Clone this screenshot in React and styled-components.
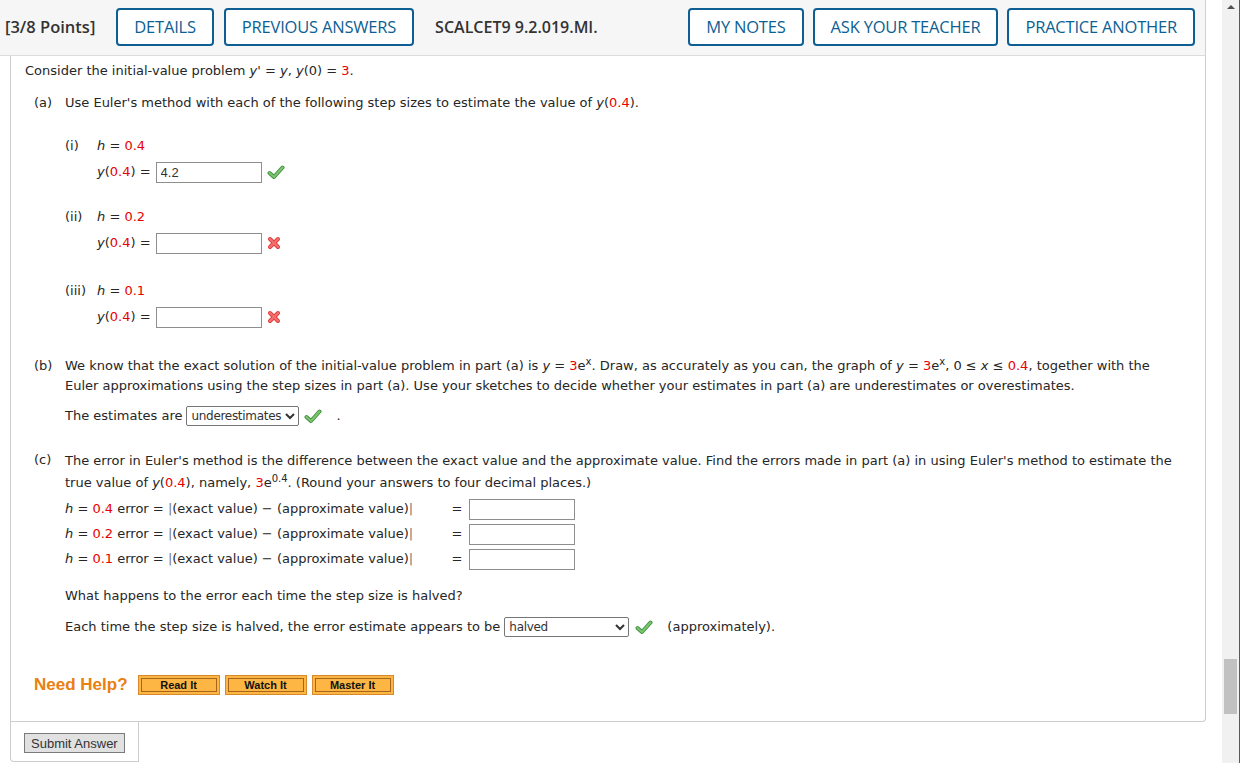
import React from "react";
import styled, { createGlobalStyle } from "styled-components";

const GlobalStyle = createGlobalStyle`
  html, body { margin: 0; padding: 0; background: #fff; overflow: hidden; }
  * { box-sizing: border-box; }
`;

const RED = "#e60000";

const Page = styled.div`
  display: flex;
  width: 1240px;
  height: 763px;
  overflow: hidden;
  font-family: "DejaVu Sans", Verdana, sans-serif;
  font-size: 13px;
  color: #262626;
`;

const Main = styled.div`
  width: 1206px;
  display: flex;
  flex-direction: column;
`;

const Gutter = styled.div`
  width: 16px;
`;

const Scrollbar = styled.div`
  width: 18px;
  background: #f1f1f1;
  border-right: 1px solid #5a5a5a;
  display: flex;
  flex-direction: column;
  align-items: center;
`;

const ArrowUp = styled.div`
  margin-top: 5px;
  width: 0;
  height: 0;
  border-left: 4px solid transparent;
  border-right: 4px solid transparent;
  border-bottom: 4px solid #505050;
`;

const Thumb = styled.div`
  margin-top: 650px;
  width: 13px;
  height: 55px;
  background: #c1c1c1;
`;

const Header = styled.header`
  height: 56px;
  background: #f6f6f6;
  border-bottom: 1px solid #dcdcdc;
  border-right: 1px solid #cfcfcf;
  display: flex;
  align-items: center;
  padding: 0 10px 2px 5px;
  font-family: "Open Sans", "Noto Sans", sans-serif;
`;

const Points = styled.span`
  font-size: 16.5px;
  font-weight: 600;
  color: #333;
  margin-right: 21px;
`;

const HeadButton = styled.button`
  height: 38px;
  padding: 0 16px;
  margin-right: ${(p) => p.$gap || 0}px;
  border: 2px solid #0d5f93;
  border-radius: 4px;
  background: #fff;
  color: #0d5f93;
  font-family: "Open Sans", "Noto Sans", sans-serif;
  font-size: 16.5px;
  letter-spacing: -0.2px;
`;

const Code = styled.span`
  font-size: 16px;
  font-weight: 600;
  color: #333;
  margin-left: 21px;
`;

const Spacer = styled.div`
  flex: 1;
`;

const Panel = styled.div`
  margin-left: 10px;
  border: 1px solid #cdcdcd;
  border-top: none;
  border-radius: 0 0 4px 0;
  padding: 5px 20px 26px 14px;
  line-height: 20px;
`;

const Line = styled.div`
  margin-top: ${(p) => p.$mt || 0}px;
  line-height: ${(p) => p.$lh || 20}px;
`;

const Part = styled.div`
  display: grid;
  grid-template-columns: 31px 1fr;
  margin-left: 9px;
  margin-top: ${(p) => p.$mt || 0}px;
`;

const SubItem = styled.div`
  display: grid;
  grid-template-columns: 32px 1fr;
  margin-top: ${(p) => p.$mt || 0}px;
`;

const Row = styled.div`
  display: flex;
  align-items: center;
  height: 22px;
  margin-top: ${(p) => p.$mt || 0}px;
`;

const I = styled.i`
  font-style: italic;
`;

const Red = styled.span`
  color: ${RED};
`;

const Sup = styled.sup`
  font-size: 10px;
  vertical-align: 5px;
  line-height: 0;
`;

const Answer = styled.input`
  width: ${(p) => p.$w || 106}px;
  height: 21px;
  margin-left: ${(p) => p.$ml || 0}px;
  border: 1px solid #8e8e8e;
  padding: 0 4px;
  font-family: "Liberation Sans", Arial, sans-serif;
  font-size: 13px;
  color: #333;
  outline: none;
`;

const Select = styled.select`
  width: ${(p) => p.$w}px;
  height: 20px;
  margin-left: 4px;
  border: 1px solid #767676;
  border-radius: 2px;
  background: #fff;
  padding: 0;
  font-family: "DejaVu Sans", Verdana, sans-serif;
  font-size: 12px;
  letter-spacing: -0.3px;
  color: #333;
`;

const IconWrap = styled.span`
  display: inline-flex;
  margin-left: ${(p) => p.$ml || 5}px;
`;

const Trail = styled.span`
  margin-left: ${(p) => p.$ml}px;
`;

const ErrorGrid = styled.div`
  display: grid;
  grid-template-columns: 380px 24px 106px;
  grid-auto-rows: 20px;
  row-gap: 5px;
  align-items: center;
  margin-top: 5px;
`;

const Eq = styled.span`
  text-align: center;
`;

const Bar = styled.span`
  color: #777;
`;

const HelpRow = styled.div`
  display: flex;
  align-items: center;
  margin-top: 37px;
  margin-left: 9px;
`;

const NeedHelp = styled.span`
  font-family: "Liberation Sans", Arial, sans-serif;
  font-weight: bold;
  font-size: 17px;
  color: #e9800f;
  margin-right: 10px;
`;

const HelpButton = styled.button`
  width: 82px;
  height: 20px;
  margin-right: 5px;
  padding: 0;
  border: 1px solid #d8892a;
  background: #fdb643;
  box-shadow: inset 0 0 0 2px #fdb643, inset 0 0 0 3px #a8651a;
  font-family: "Liberation Sans", Arial, sans-serif;
  font-weight: bold;
  font-size: 11px;
  color: #111;
`;

const SubmitTab = styled.div`
  margin-left: 10px;
  width: 129px;
  height: 40px;
  border: 1px solid #cdcdcd;
  border-top: none;
  border-radius: 0 0 0 4px;
  padding: 11px 0 0 13px;
`;

const SubmitButton = styled.button`
  height: 20px;
  padding: 0 6px;
  border: 1px solid #7a7a7a;
  background: #e1e1e1;
  font-family: "Liberation Sans", Arial, sans-serif;
  font-size: 13px;
  color: #333;
`;

const Check = () => (
  <svg width="18" height="15" viewBox="0 0 18 15">
    <path d="M2.5 8 L7 12 L15.5 2.5" fill="none" stroke="#3f8f3f" strokeWidth="4" strokeLinejoin="round" strokeLinecap="round" />
    <path d="M2.5 8 L7 12 L15.5 2.5" fill="none" stroke="#7cc46f" strokeWidth="2.2" strokeLinejoin="round" strokeLinecap="round" />
  </svg>
);

const Cross = () => (
  <svg width="14" height="14" viewBox="0 0 14 14">
    <path d="M3 3 L11 11 M11 3 L3 11" stroke="#e03a3a" strokeWidth="4" strokeLinecap="round" />
    <path d="M3 3 L11 11 M11 3 L3 11" stroke="#f47070" strokeWidth="2.2" strokeLinecap="round" />
  </svg>
);

const Y04 = () => (
  <>
    <I>y</I>(<Red>0.4</Red>) =
  </>
);

const subs = [
  { label: "(i)", h: "0.4", value: "4.2", ok: true, mt: 23 },
  { label: "(ii)", h: "0.2", value: "", ok: false, mt: 24 },
  { label: "(iii)", h: "0.1", value: "", ok: false, mt: 27 },
];

const errors = ["0.4", "0.2", "0.1"];

const buttonsLeft = ["DETAILS", "PREVIOUS ANSWERS"];
const buttonsRight = ["MY NOTES", "ASK YOUR TEACHER", "PRACTICE ANOTHER"];

export default function App() {
  return (
    <Page>
      <GlobalStyle />
      <Main>
        <Header>
          <Points>[3/8 Points]</Points>
          {buttonsLeft.map((b, i) => (
            <HeadButton key={b} $gap={i === 0 ? 10 : 0}>{b}</HeadButton>
          ))}
          <Code>SCALCET9 9.2.019.MI.</Code>
          <Spacer />
          {buttonsRight.map((b, i) => (
            <HeadButton key={b} $gap={i < 2 ? 9 : 0}>{b}</HeadButton>
          ))}
        </Header>

        <Panel>
          <Line>
            Consider the initial-value problem <I>y</I>' = <I>y</I>, <I>y</I>(0) = <Red>3</Red>.
          </Line>

          <Part $mt={12}>
            <span>(a)</span>
            <div>
              <Line>
                Use Euler's method with each of the following step sizes to estimate the value of{" "}
                <I>y</I>(<Red>0.4</Red>).
              </Line>
              {subs.map((s) => (
                <SubItem key={s.label} $mt={s.mt}>
                  <span>{s.label}</span>
                  <div>
                    <Line>
                      <I>h</I> = <Red>{s.h}</Red>
                    </Line>
                    <Row $mt={5}>
                      <Y04 />
                      <Answer $ml={5} defaultValue={s.value} />
                      <IconWrap $ml={5}>{s.ok ? <Check /> : <Cross />}</IconWrap>
                    </Row>
                  </div>
                </SubItem>
              ))}
            </div>
          </Part>

          <Part $mt={28}>
            <span>(b)</span>
            <div>
              <Line>
                We know that the exact solution of the initial-value problem in part (a) is <I>y</I> ={" "}
                <Red>3</Red>e<Sup>x</Sup>. Draw, as accurately as you can, the graph of <I>y</I> ={" "}
                <Red>3</Red>e<Sup>x</Sup>, 0 ≤ <I>x</I> ≤ <Red>0.4</Red>, together with the Euler
                approximations using the step sizes in part (a). Use your sketches to decide whether your
                estimates in part (a) are underestimates or overestimates.
              </Line>
              <Row $mt={9}>
                The estimates are
                <Select $w={113} defaultValue="under">
                  <option value="under">underestimates</option>
                  <option value="over">overestimates</option>
                </Select>
                <IconWrap $ml={5}>
                  <Check />
                </IconWrap>
                <Trail $ml={14}>.</Trail>
              </Row>
            </div>
          </Part>

          <Part $mt={23}>
            <span>(c)</span>
            <div>
              <Line $lh={22}>
                The error in Euler's method is the difference between the exact value and the approximate
                value. Find the errors made in part (a) in using Euler's method to estimate the true value
                of <I>y</I>(<Red>0.4</Red>), namely, <Red>3</Red>e<Sup>0.4</Sup>. (Round your answers to
                four decimal places.)
              </Line>
              <ErrorGrid>
                {errors.map((h) => (
                  <React.Fragment key={h}>
                    <span>
                      <I>h</I> = <Red>{h}</Red> error = <Bar>|</Bar>(exact value) − (approximate value)
                      <Bar>|</Bar>
                    </span>
                    <Eq>=</Eq>
                    <Answer />
                  </React.Fragment>
                ))}
              </ErrorGrid>
              <Line $mt={17}>What happens to the error each time the step size is halved?</Line>
              <Row $mt={10}>
                Each time the step size is halved, the error estimate appears to be
                <Select $w={125} defaultValue="halved">
                  <option value="halved">halved</option>
                  <option value="doubled">doubled</option>
                </Select>
                <IconWrap $ml={6}>
                  <Check />
                </IconWrap>
                <Trail $ml={14}>(approximately).</Trail>
              </Row>
            </div>
          </Part>

          <HelpRow>
            <NeedHelp>Need Help?</NeedHelp>
            <HelpButton>Read It</HelpButton>
            <HelpButton>Watch It</HelpButton>
            <HelpButton>Master It</HelpButton>
          </HelpRow>
        </Panel>

        <SubmitTab>
          <SubmitButton>Submit Answer</SubmitButton>
        </SubmitTab>
      </Main>
      <Gutter />
      <Scrollbar>
        <ArrowUp />
        <Thumb />
      </Scrollbar>
    </Page>
  );
}
